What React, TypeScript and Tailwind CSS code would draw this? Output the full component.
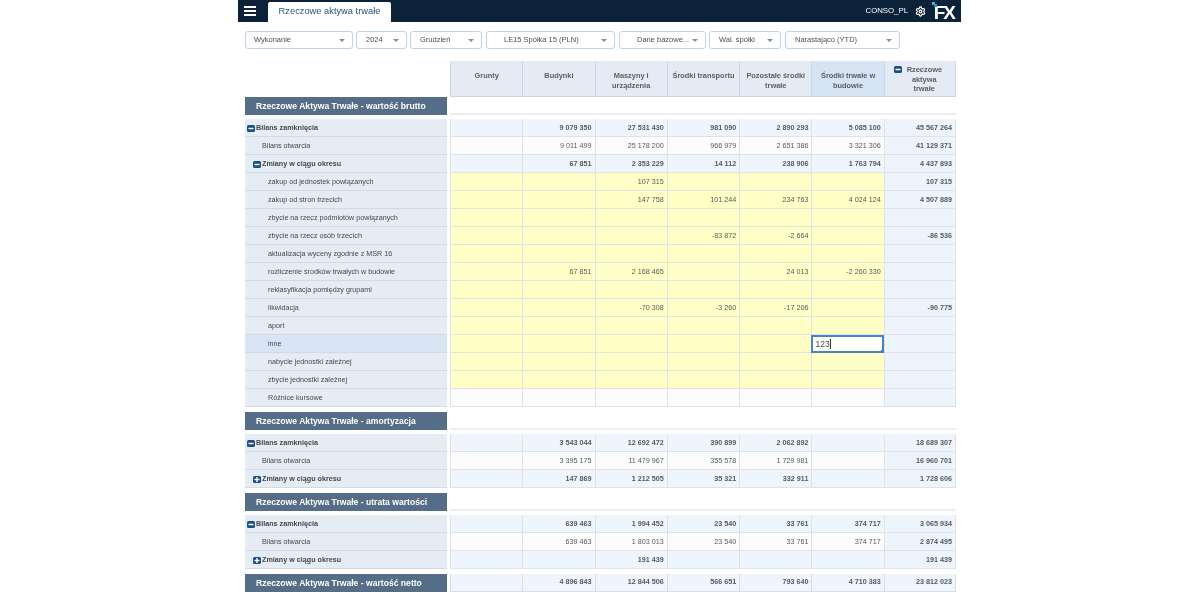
import { Settings } from "lucide-react";

type Kind = "close" | "open" | "change" | "changeClosed" | "item" | "plain";

interface Row {
  label: string;
  kind: Kind;
  values: string[];
  total?: string;
  active?: boolean;
}

const FILTERS = [
  { label: "Wykonanie", w: "w-[108px]", text: "pl-[8px]", mr: "mr-[3px]" },
  { label: "2024", w: "w-[51px]", text: "pl-[9px]", mr: "mr-[3px]" },
  { label: "Grudzień", w: "w-[72px]", text: "pl-[9px]", mr: "mr-[4px]" },
  { label: "LE15 Spółka 15 (PLN)", w: "w-[129px]", text: "pl-[17px]", mr: "mr-[4px]" },
  { label: "Dane bazowe...", w: "w-[87px]", text: "pl-[17px]", mr: "mr-[3px]" },
  { label: "Wal. spółki", w: "w-[72px]", text: "pl-[9px]", mr: "mr-[4px]" },
  { label: "Narastająco (YTD)", w: "w-[115px]", text: "pl-[9px]", mr: "" },
];

const COLUMNS = ["Grunty", "Budynki", "Maszyny i urządzenia", "Środki transportu", "Pozostałe środki trwałe", "Środki trwałe w budowie"];

const GROSS: Row[] = [
  { label: "Bilans zamknięcia", kind: "close", values: ["", "9 079 350", "27 531 430", "981 090", "2 890 293", "5 085 100"], total: "45 567 264" },
  { label: "Bilans otwarcia", kind: "open", values: ["", "9 011 499", "25 178 200", "966 979", "2 651 386", "3 321 306"], total: "41 129 371" },
  { label: "Zmiany w ciągu okresu", kind: "change", values: ["", "67 851", "2 353 229", "14 112", "238 906", "1 763 794"], total: "4 437 893" },
  { label: "zakup od jednostek powiązanych", kind: "item", values: ["", "", "107 315", "", "", ""], total: "107 315" },
  { label: "zakup od stron trzecich", kind: "item", values: ["", "", "147 758", "101 244", "234 763", "4 024 124"], total: "4 507 889" },
  { label: "zbycie na rzecz podmiotów powiązanych", kind: "item", values: ["", "", "", "", "", ""] },
  { label: "zbycie na rzecz osób trzecich", kind: "item", values: ["", "", "", "-83 872", "-2 664", ""], total: "-86 536" },
  { label: "aktualizacja wyceny zgodnie z MSR 16", kind: "item", values: ["", "", "", "", "", ""] },
  { label: "rozliczenie środków trwałych w budowie", kind: "item", values: ["", "67 851", "2 168 465", "", "24 013", "-2 260 330"] },
  { label: "reklasyfikacja pomiędzy grupami", kind: "item", values: ["", "", "", "", "", ""] },
  { label: "likwidacja", kind: "item", values: ["", "", "-70 308", "-3 260", "-17 206", ""], total: "-90 775" },
  { label: "aport", kind: "item", values: ["", "", "", "", "", ""] },
  { label: "inne", kind: "item", values: ["", "", "", "", "", ""], active: true },
  { label: "nabycie jednostki zależnej", kind: "item", values: ["", "", "", "", "", ""] },
  { label: "zbycie jednostki zależnej", kind: "item", values: ["", "", "", "", "", ""] },
  { label: "Różnice kursowe", kind: "plain", values: ["", "", "", "", "", ""] },
];

const AMORT: Row[] = [
  { label: "Bilans zamknięcia", kind: "close", values: ["", "3 543 044", "12 692 472", "390 899", "2 062 892", ""], total: "18 689 307" },
  { label: "Bilans otwarcia", kind: "open", values: ["", "3 395 175", "11 479 967", "355 578", "1 729 981", ""], total: "16 960 701" },
  { label: "Zmiany w ciągu okresu", kind: "changeClosed", values: ["", "147 869", "1 212 505", "35 321", "332 911", ""], total: "1 728 606" },
];

const IMPAIR: Row[] = [
  { label: "Bilans zamknięcia", kind: "close", values: ["", "639 463", "1 994 452", "23 540", "33 761", "374 717"], total: "3 065 934" },
  { label: "Bilans otwarcia", kind: "open", values: ["", "639 463", "1 803 013", "23 540", "33 761", "374 717"], total: "2 874 495" },
  { label: "Zmiany w ciągu okresu", kind: "changeClosed", values: ["", "", "191 439", "", "", ""], total: "191 439" },
];

function ToggleIcon({ plus }: { plus?: boolean }) {
  return (
    <svg width="8" height="7" viewBox="0 0 8 7" className="shrink-0">
      <rect width="8" height="7" rx="1.5" fill="#1f4f86" />
      <rect x="1.5" y="2.8" width="5" height="1.4" fill="#fff" />
      {plus && <rect x="3.3" y="1" width="1.4" height="5" fill="#fff" />}
    </svg>
  );
}

function Filter({ label, w, text, mr }: { label: string; w: string; text: string; mr: string }) {
  return (
    <div className={`${w} ${mr} h-[18px] flex items-center justify-between pr-[7px] bg-white border border-[#bfd4ec] rounded-[3px] ${text}`}>
      <span className="text-[7.5px] text-[#4a4f55] whitespace-nowrap">{label}</span>
      <span className="w-0 h-0 border-l-[3px] border-r-[3px] border-t-[3px] border-l-transparent border-r-transparent border-t-[#8a8f95]" />
    </div>
  );
}

function SectionRow({ title, values, total }: { title: string; values?: string[]; total?: string }) {
  return (
    <div className="flex h-[18px]">
      <div className="w-[202px] mr-[3px] bg-[#566d87] flex items-center pl-[11px] text-[8.6px] font-bold text-white whitespace-nowrap">
        {title}
      </div>
      {values ? (
        <div className="flex-1 grid grid-cols-7">
          {values.map((v, i) => (
            <div key={i} className="bg-[#eef5fd] border-l border-b border-[#d8dee6] flex items-center justify-end pr-[3px] text-[7.2px] font-bold text-[#555a60]">
              {v}
            </div>
          ))}
          <div className="bg-[#eef5fd] border-x border-b border-[#d8dee6] flex items-center justify-end pr-[3px] text-[7.2px] font-bold text-[#555a60]">
            {total}
          </div>
        </div>
      ) : (
        <div className="flex-1 border-b-2 border-[#eeeeee]" />
      )}
    </div>
  );
}

// low: w dolnych sekcjach tekst siedzi piksel niżej
function DataRow({ row, low }: { row: Row; low?: boolean }) {
  const isBold = row.kind === "close" || row.kind === "change" || row.kind === "changeClosed";
  const textPad = low ? "pt-[2px]" : "pt-[1px]";
  let cellBg = "bg-[#eef5fd]";
  if (row.kind === "open" || row.kind === "plain") cellBg = "bg-[#fcfcfc]";
  if (row.kind === "item") cellBg = "bg-[#ffffc6]";

  let pad = "pl-[23px]";
  if (row.kind === "close") pad = "pl-[2px]";
  if (row.kind === "change" || row.kind === "changeClosed") pad = "pl-[8px]";
  if (row.kind === "open") pad = "pl-[17px]";

  return (
    <div className="flex h-[18px]">
      <div className={`w-[202px] mr-[3px] border-b border-[#d3dae3] flex items-center gap-[1px] whitespace-nowrap text-[7.2px] text-[#43484e] ${row.active ? "bg-[#d9e5f5]" : "bg-[#e6ecf4]"} ${pad} ${textPad} ${isBold ? "font-bold" : ""}`}>
        {row.kind === "close" && <ToggleIcon />}
        {row.kind === "change" && <ToggleIcon />}
        {row.kind === "changeClosed" && <ToggleIcon plus />}
        <span>{row.label}</span>
      </div>
      <div className="flex-1 grid grid-cols-7">
        {row.values.map((v, i) =>
          row.active && i === 5 ? (
            <div key={i} className="relative bg-white border-2 border-[#4a82c9] flex items-center pl-[2px] text-[8.5px] text-[#43484e]">
              <span>123</span>
              <span className="w-px h-[10px] bg-[#333333]" />
              <span className="absolute -right-[2px] -bottom-[2px] w-[3px] h-[3px] bg-[#3b78d0]" />
            </div>
          ) : (
            <div key={i} className={`${cellBg} border-l border-b border-[#dfe2e6] flex items-center justify-end pr-[3px] text-[7.2px] text-[#555a60] ${textPad} ${isBold ? "font-bold" : ""}`}>
              {v}
            </div>
          )
        )}
        <div className={`bg-[#eef4fc] border-x border-b border-[#dfe2e6] flex items-center justify-end pr-[3px] text-[7.2px] font-bold text-[#555a60] ${textPad}`}>
          {row.total}
        </div>
      </div>
    </div>
  );
}

export default function App() {
  return (
    <div className="w-[1200px] h-[600px] bg-white overflow-hidden blur-[0.3px]" style={{ fontFamily: '"Liberation Sans", Arial, sans-serif' }}>
      <div className="ml-[238px] w-[723px]">
        {/* top bar */}
        <div className="h-[22px] bg-[#0b2239] flex items-end pl-[6px] pr-[5px]">
          <div className="self-center w-[12px] flex flex-col gap-[1.5px] mr-[12px]">
            <span className="h-[2.5px] bg-white" />
            <span className="h-[2.5px] bg-white" />
            <span className="h-[2.5px] bg-white" />
          </div>
          <div className="w-[123px] h-[20px] bg-white rounded-t-[2px] flex items-center justify-center text-[9.3px] text-[#2a5578] whitespace-nowrap">
            Rzeczowe aktywa trwałe
          </div>
          <div className="flex-1" />
          <div className="self-center flex items-center">
            <span className="text-[7.8px] text-white mr-[7px]">CONSO_PL</span>
            <Settings size={11} className="text-white mr-[6px]" strokeWidth={2.5} />
            <div className="relative w-[24px] h-[19px] flex items-end justify-end">
              <span className="absolute left-0 top-0 w-[3px] h-[3px] bg-[#3fb4e6]" />
              <span className="absolute left-[2px] top-[2px] w-[3px] h-[3px] bg-[#2f8fc4]" />
              <span className="text-[19px] leading-[17px] font-bold text-white tracking-[-2px] pr-[2px]">FX</span>
            </div>
          </div>
        </div>

        {/* filters */}
        <div className="flex mt-[9px] pl-[7px]">
          {FILTERS.map((f) => (
            <Filter key={f.label} {...f} />
          ))}
        </div>

        {/* table */}
        <div className="mt-[12px] pl-[7px] pr-[5px]">
          <div className="flex h-[36px]">
            <div className="w-[202px] mr-[3px]" />
            <div className="flex-1 grid grid-cols-7">
              {COLUMNS.map((c, i) => (
                <div key={c} className={`border-l border-b border-[#ccd6e2] pt-[10px] px-[2px] text-center text-[7.4px] leading-[10px] font-bold text-[#5a6068] ${i === 5 ? "bg-[#d6e3f3]" : "bg-[#e4ebf4]"}`}>
                  {c}
                </div>
              ))}
              <div className="border-x border-b border-[#ccd6e2] bg-[#e4ebf4] pt-[4px] pl-[9px] flex gap-[5px] text-center text-[7.4px] leading-[9.5px] font-bold text-[#5a6068]">
                <span className="pt-[1px]">
                  <ToggleIcon />
                </span>
                <span className="w-[35px]">Rzeczowe aktywa trwałe</span>
              </div>
            </div>
          </div>

          <SectionRow title="Rzeczowe Aktywa Trwałe - wartość brutto" />
          <div className="mt-[4px]">
            {GROSS.map((r) => (
              <DataRow key={r.label} row={r} />
            ))}
          </div>

          <div className="mt-[5px]">
            <SectionRow title="Rzeczowe Aktywa Trwałe - amortyzacja" />
          </div>
          <div className="mt-[4px]">
            {AMORT.map((r) => (
              <DataRow key={r.label} row={r} low />
            ))}
          </div>

          <div className="mt-[5px]">
            <SectionRow title="Rzeczowe Aktywa Trwałe - utrata wartości" />
          </div>
          <div className="mt-[4px]">
            {IMPAIR.map((r) => (
              <DataRow key={r.label} row={r} low />
            ))}
          </div>

          <div className="mt-[5px]">
            <SectionRow
              title="Rzeczowe Aktywa Trwałe - wartość netto"
              values={["", "4 896 843", "12 844 506", "566 651", "793 640", "4 710 383"]}
              total="23 812 023"
            />
          </div>
        </div>
      </div>
    </div>
  );
}
